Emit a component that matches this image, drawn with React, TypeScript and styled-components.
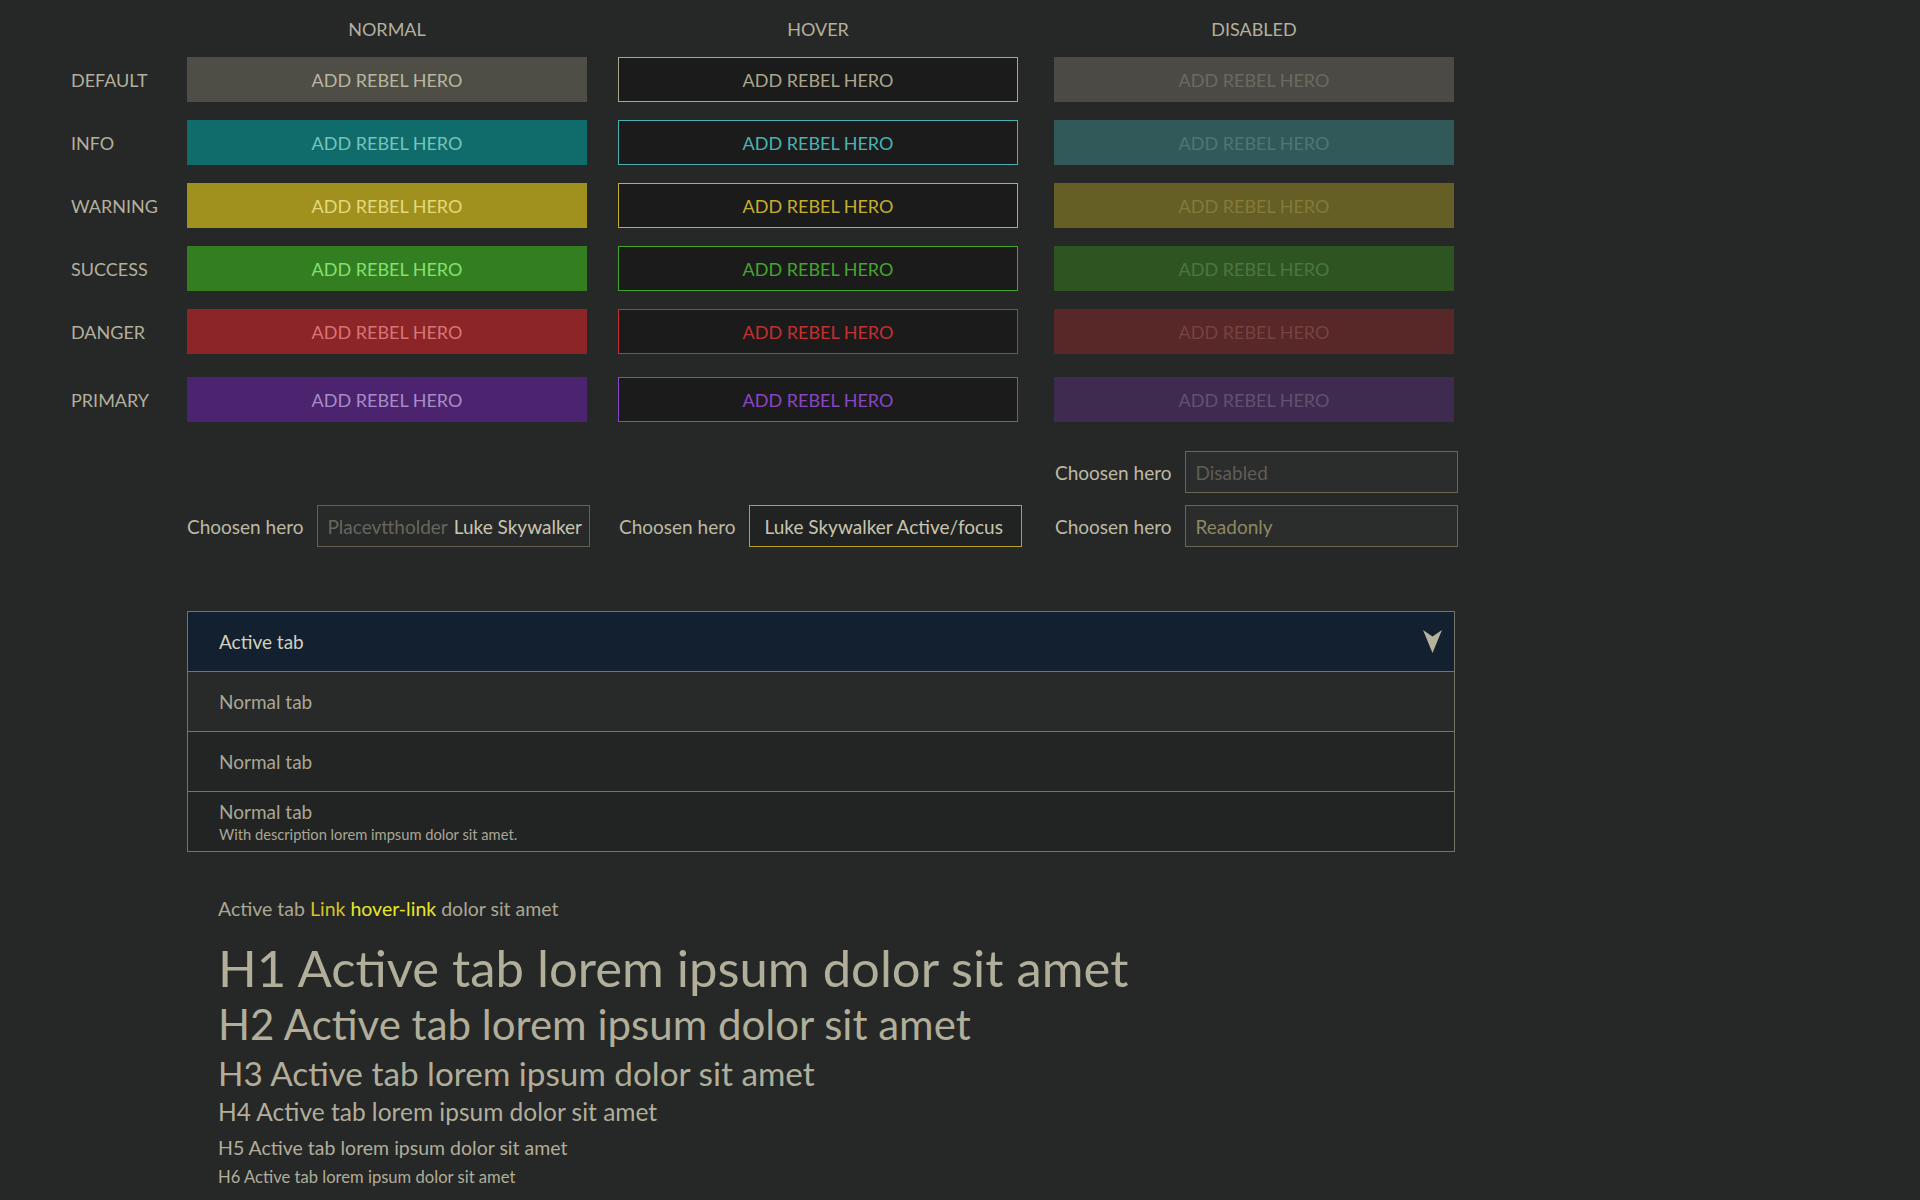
import React from "react";
import styled, { createGlobalStyle, css } from "styled-components";

const FONT = `Lato, "Open Sans", sans-serif`;

const GlobalStyle = createGlobalStyle`
  html, body { margin: 0; padding: 0; background: #262727; }
  body { font-family: ${FONT}; color: #b3b09d; }
  * { box-sizing: border-box; }
`;

type Variant = "default" | "info" | "warning" | "success" | "danger" | "primary";
type State = "normal" | "hover" | "disabled";

const palette: Record<Variant, { bg: string; fg: string; hover: string; dBg: string; dFg: string }> = {
  default: { bg: "#4e4d46", fg: "#b9b6a0", hover: "#aaa68c", dBg: "#4b4a44", dFg: "#6b6a60" },
  info: { bg: "#0f6c6a", fg: "#76c3bd", hover: "#4bb2b3", dBg: "#31595a", dFg: "#4d7775" },
  warning: { bg: "#a0911e", fg: "#e3d97a", hover: "#c5ae2e", dBg: "#655e25", dFg: "#847a3a" },
  success: { bg: "#337e21", fg: "#86e070", hover: "#43a52e", dBg: "#2e5521", dFg: "#4b7541" },
  danger: { bg: "#8b2527", fg: "#d97476", hover: "#c42f30", dBg: "#582727", dFg: "#764242" },
  primary: { bg: "#4b236f", fg: "#a88cc6", hover: "#8a45c4", dBg: "#3e2b4f", dFg: "#625170" },
};

const Page = styled.div`
  padding-left: 71px;
  padding-bottom: 20px;
  min-height: 1200px;
`;

const ButtonGrid = styled.div`
  display: grid;
  grid-template-columns: 116px 431px 436px 400px;
  grid-template-rows: 39px repeat(5, 45px) 50px;
  row-gap: 18px;
  align-items: end;
`;

const ColHeader = styled.div`
  width: 400px;
  height: 39px;
  padding-top: 19px;
  text-align: center;
  font-size: 18px;
  line-height: 20px;
  text-transform: uppercase;
  color: #b3b09d;
`;

const RowLabel = styled.div`
  height: 45px;
  display: flex;
  align-items: center;
  font-size: 18px;
  line-height: 24px;
  text-transform: uppercase;
  color: #b3b09d;
`;

const BtnCell = styled.div`
  height: 45px;
`;

const Btn = styled.button<{ $v: Variant; $s: State }>`
  display: block;
  width: 400px;
  height: 45px;
  margin: 0;
  padding: 0;
  border: 1px solid transparent;
  font-family: ${FONT};
  font-size: 18px;
  text-transform: uppercase;
  cursor: pointer;
  ${({ $v, $s }) => {
    const p = palette[$v];
    if ($s === "hover")
      return css`
        background: #1b1b1b;
        border-color: ${p.hover};
        color: ${p.hover};
      `;
    if ($s === "disabled")
      return css`
        background: ${p.dBg};
        color: ${p.dFg};
        cursor: default;
      `;
    return css`
      background: ${p.bg};
      color: ${p.fg};
    `;
  }}
`;

const InputGrid = styled.div`
  display: grid;
  grid-template-columns: 116px 432px 436px 400px;
  grid-auto-rows: 42px;
  row-gap: 12px;
  margin-top: 29px;
  align-items: center;
`;

const Field = styled.div<{ $col: number }>`
  grid-column: ${({ $col }) => $col};
  display: flex;
  align-items: center;
  gap: 13px;
`;

const FieldLabel = styled.span`
  flex-shrink: 0;
  font-size: 19px;
  color: #bdb9a5;
  white-space: nowrap;
`;

type InputKind = "normal" | "focus" | "disabled" | "readonly";

const FakeInput = styled.div<{ $k: InputKind }>`
  flex-shrink: 0;
  width: 273px;
  height: 42px;
  display: flex;
  align-items: center;
  overflow: hidden;
  white-space: nowrap;
  font-size: 19px;
  border: 1px solid #64614d;
  background: #282929;
  padding-left: 10px;
  color: #c8c5b0;
  ${({ $k }) =>
    $k === "focus" &&
    css`
      border-color: #b9a02b;
      background: #212222;
      padding-left: 15px;
    `}
  ${({ $k }) =>
    $k === "disabled" &&
    css`
      border-color: #6a6751;
      background: #2b2c2c;
      color: #5f5e56;
    `}
  ${({ $k }) =>
    $k === "readonly" &&
    css`
      border-color: #6a6751;
      background: #2b2c2c;
      color: #8e8862;
    `}
`;

const Placeholder = styled.span`
  color: #67665c;
  margin-right: 6px;
`;

const Tabs = styled.div`
  margin-left: 116px;
  margin-top: 64px;
  width: 1268px;
  border: 1px solid #76746a;
`;

const Tab = styled.div<{ $active?: boolean; $shade: string }>`
  height: 60px;
  padding: 0 12px 0 31px;
  display: flex;
  align-items: center;
  justify-content: space-between;
  background: ${({ $shade }) => $shade};
  & + & {
    border-top: 1px solid #76746a;
  }
  ${({ $active }) =>
    $active &&
    css`
      height: 59px;
    `}
`;

const TabText = styled.div`
  display: flex;
  flex-direction: column;
  gap: 2px;
`;

const TabTitle = styled.span<{ $active?: boolean }>`
  font-size: 19px;
  line-height: 22px;
  color: ${({ $active }) => ($active ? "#d3d0bf" : "#aaa795")};
`;

const TabDesc = styled.span`
  font-size: 14.7px;
  line-height: 18px;
  color: #aaa795;
`;

const Typo = styled.div`
  margin-left: 116px;
  padding-left: 31px;
  margin-top: 45px;
  color: #b1ae9a;
`;

const Para = styled.p`
  margin: 0;
  font-size: 19.5px;
  line-height: 24px;
  color: #aaa795;
`;

const LinkA = styled.a<{ $hover?: boolean }>`
  color: ${({ $hover }) => ($hover ? "#e8e62c" : "#d4c12a")};
  text-decoration: none;
`;

const H1 = styled.h1`
  margin: 17px 0 0;
  font-weight: 400;
  font-size: 50.8px;
  line-height: 60px;
`;
const H2 = styled.h2`
  margin: 1px 0 0;
  font-weight: 400;
  font-size: 42px;
  line-height: 51px;
`;
const H3 = styled.h3`
  margin: 3px 0 0;
  font-weight: 400;
  font-size: 33.3px;
  line-height: 41px;
`;
const H4 = styled.h4`
  margin: 3px 0 0;
  font-weight: 400;
  font-size: 24.5px;
  line-height: 30px;
`;
const H5 = styled.h5`
  margin: 9px 0 0;
  font-weight: 400;
  font-size: 19.5px;
  line-height: 23px;
`;
const H6 = styled.h6`
  margin: 9px 0 0;
  font-weight: 400;
  font-size: 16.6px;
  line-height: 19px;
`;

const Arrow = () => (
  <svg width="19" height="23" viewBox="0 0 19 23" aria-hidden>
    <path d="M0 0 L9.5 6.5 L19 0 L9.5 23 Z" fill="#b6b39a" />
  </svg>
);

const variants: Variant[] = ["default", "info", "warning", "success", "danger", "primary"];
const states: State[] = ["normal", "hover", "disabled"];

export default function App() {
  return (
    <Page>
      <GlobalStyle />
      <ButtonGrid>
        <div />
        <ColHeader>Normal</ColHeader>
        <ColHeader>Hover</ColHeader>
        <ColHeader>Disabled</ColHeader>
        {variants.map((v) => (
          <React.Fragment key={v}>
            <RowLabel>{v}</RowLabel>
            {states.map((s) => (
              <BtnCell key={s}>
                <Btn $v={v} $s={s} disabled={s === "disabled"}>
                  Add rebel hero
                </Btn>
              </BtnCell>
            ))}
          </React.Fragment>
        ))}
      </ButtonGrid>

      <InputGrid>
        <Field $col={4}>
          <FieldLabel>Choosen hero</FieldLabel>
          <FakeInput $k="disabled">Disabled</FakeInput>
        </Field>
        <Field $col={2}>
          <FieldLabel>Choosen hero</FieldLabel>
          <FakeInput $k="normal">
            <Placeholder>Placevttholder</Placeholder>Luke Skywalker
          </FakeInput>
        </Field>
        <Field $col={3}>
          <FieldLabel>Choosen hero</FieldLabel>
          <FakeInput $k="focus">Luke Skywalker Active/focus</FakeInput>
        </Field>
        <Field $col={4}>
          <FieldLabel>Choosen hero</FieldLabel>
          <FakeInput $k="readonly">Readonly</FakeInput>
        </Field>
      </InputGrid>

      <Tabs>
        <Tab $active $shade="#12202f">
          <TabTitle $active>Active tab</TabTitle>
          <Arrow />
        </Tab>
        <Tab $shade="#282929">
          <TabTitle>Normal tab</TabTitle>
        </Tab>
        <Tab $shade="#232424">
          <TabTitle>Normal tab</TabTitle>
        </Tab>
        <Tab $shade="#222323">
          <TabText>
            <TabTitle>Normal tab</TabTitle>
            <TabDesc>With description lorem impsum dolor sit amet.</TabDesc>
          </TabText>
        </Tab>
      </Tabs>

      <Typo>
        <Para>
          Active tab <LinkA href="#">Link</LinkA> <LinkA href="#" $hover>hover-link</LinkA> dolor sit amet
        </Para>
        <H1>H1 Active tab lorem ipsum dolor sit amet</H1>
        <H2>H2 Active tab lorem ipsum dolor sit amet</H2>
        <H3>H3 Active tab lorem ipsum dolor sit amet</H3>
        <H4>H4 Active tab lorem ipsum dolor sit amet</H4>
        <H5>H5 Active tab lorem ipsum dolor sit amet</H5>
        <H6>H6 Active tab lorem ipsum dolor sit amet</H6>
      </Typo>
    </Page>
  );
}
